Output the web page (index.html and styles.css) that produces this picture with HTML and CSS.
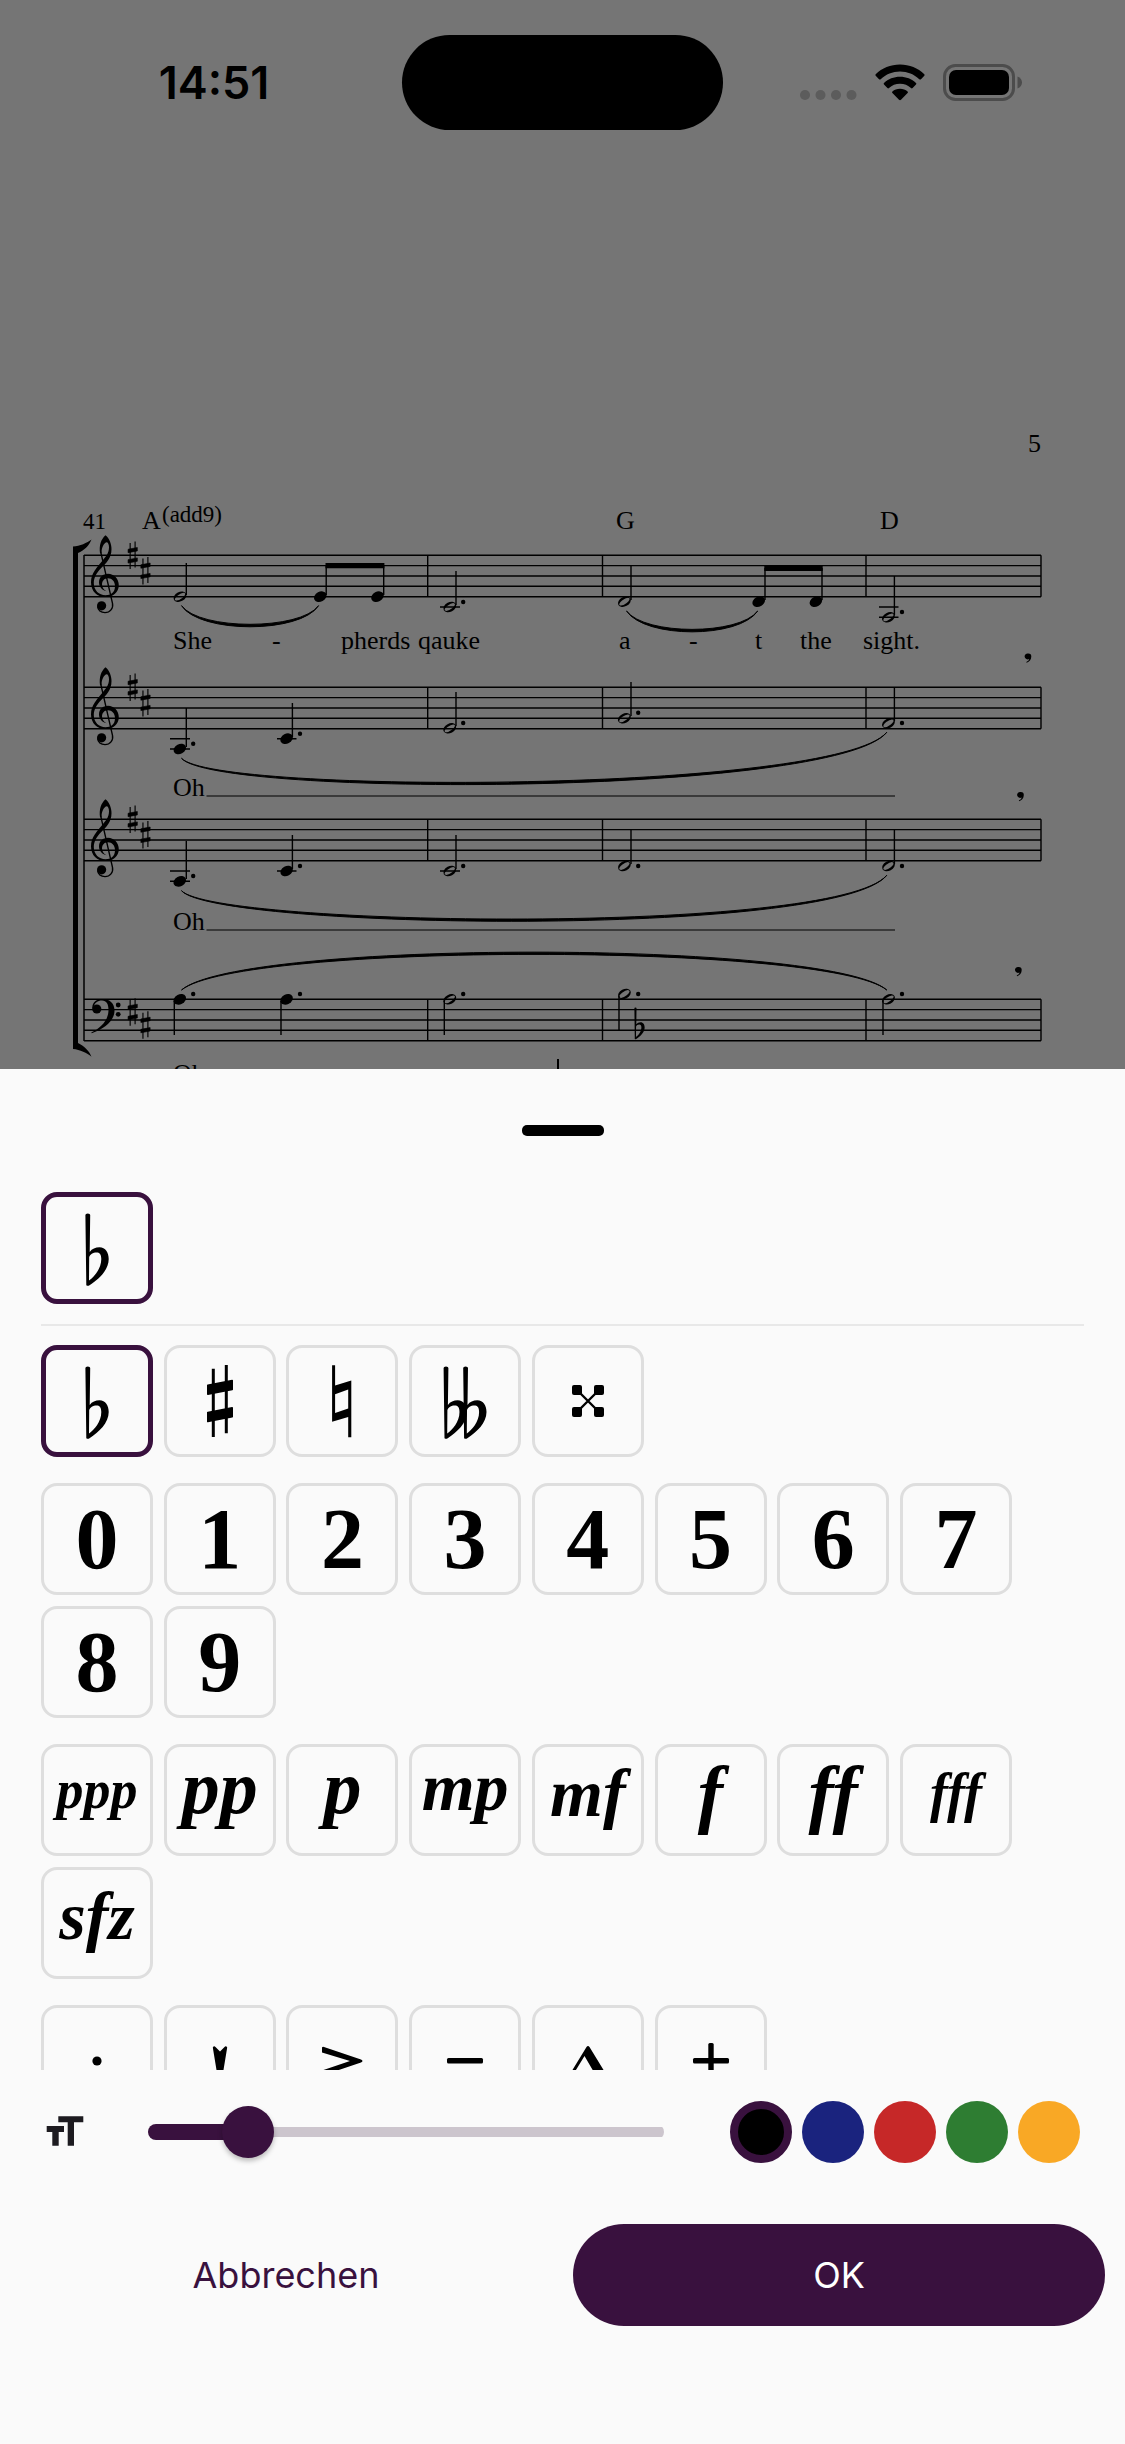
FILE: index.html
```
<!DOCTYPE html>
<html lang="de">
<head>
    <meta charset="UTF-8">
    <meta name="viewport" content="width=device-width, initial-scale=1.0">
    <title>Symbol auswählen</title>
    <link rel="stylesheet" href="styles.css">
</head>
<body>
    <!-- Shared music symbols, all centred on 0,0 -->
    <svg class="defs" aria-hidden="true">
        <defs>
            <path id="flat" fill-rule="evenodd" d="M-11.6-33q0-1.5 2.4-1.5t2.4 1.5L-7.3 4C-5 .8-1.5-.7 2.5-.7 8.5-.7 11.7 5 11.7 11 11.7 22 2 31-7.5 37.3q-1.6 1-3.2 0ZM-7.8 9L-8 32.5C-3 29 4.3 21 4.3 11 4.3 6 2.5 4.4-.5 4.4-4 4.4-7 6.5-7.8 9Z"/>
            <g id="sharp">
                <path d="M-6.7-32.3V36M6.3-36V32.3" fill="none" stroke="#000" stroke-width="3"/>
                <path d="M-12.2-15.8L12.2-20.5V-11.5L-12.2-6.8ZM-12.2 11.5L12.2 6.8V15.8L-12.2 20.5Z" stroke="#000" stroke-width="1.6" stroke-linejoin="round"/>
            </g>
            <g id="treble">
                <path d="M14.5-51C18.5-48 20.5-42 20.5-37 20.5-28 15-23 10-18 6-14 2.8-9 2.8-3 2.8 4 8 9 14.5 9 20 9 24 6 24 0 24-5 21-8 17-8 13-8 11-5 11-2 11 1 12.5 3.5 15.5 5 11 4 8 .5 8-4 8-9 12-12.5 17-12.5 23-12.5 27.8-7.5 27.8-1 27.8 6 22 10.8 14.5 10.8 6 10.8 0 5 0-4 0-13 6-19 11-25 15-30 18-33 18-39 18-42 17-44 15.5-44 12.5-43 10.5-38 10.5-33L9-33C8-41 10-47 14.5-51Z"/>
                <path d="M9.6-35L21.5 17C22.5 22 19 26.3 14 26.3 10 26.3 6.7 24 6.7 20" fill="none" stroke="#000" stroke-width="1.4"/>
                <circle cx="10.6" cy="19.5" r="4.6"/>
            </g>
            <ellipse id="black-note" rx="6.6" ry="4.9" transform="rotate(-28)"/>
            <path id="half-note" fill-rule="evenodd" transform="rotate(-28)" d="M-6.8 0A6.8 4.7 0 1 1 6.8 0A6.8 4.7 0 1 1-6.8 0ZM-5.8 1A6 2.3 -5 1 0 5.8-1A6 2.3 -5 1 0-5.8 1Z"/>
            <path id="breath" d="M0-4.5A3 3 0 0 1 3-1.4C3 2 1 4-1.6 4.8L-2 4C-.3 3.2.8 2.2.8 1A3 3 0 1 1 0-4.5Z"/>
            <g id="staff">
                <path d="M84 0H1041M84 10.3H1041M84 20.7H1041M84 31H1041M84 41.4H1041M427.7 0V41.4M602.5 0V41.4M866 0V41.4M1041 0V41.4" fill="none" stroke="#000" stroke-width="1.4"/>
            </g>
            <g id="treble-staff">
                <use href="#staff"/>
                <use href="#treble" x="91" y="31"/>
                <use href="#sharp" transform="translate(132.7 0) scale(.38)"/>
                <use href="#sharp" transform="translate(145.5 15.5) scale(.38)"/>
            </g>
        </defs>
    </svg>

    <header class="status-bar">
        <time class="clock">14:51</time>
        <div class="island"></div>
        <div class="status-icons">
            <svg width="57" height="37" viewBox="0 0 57 37" fill="#5c5c5c">
                <circle cx="5" cy="31" r="5"/><circle cx="20.5" cy="31" r="5"/><circle cx="36" cy="31" r="5"/><circle cx="51.5" cy="31" r="5"/>
            </svg>
            <svg width="50" height="37" viewBox="0 0 50 37">
                <path d="M25 0.5C34.500 .5 43 4 49.300 10.200Q50 11 49.300 11.800L46 15.200Q45.200 16 44.300 15.200C39 10.300 32.500 7.500 25 7.500S11 10.300 5.700 15.200Q4.800 16 4 15.200L.7 11.800Q0 11 .7 10.200C7 4 15.500.5 25 .5Z"/>
                <path d="M25 12.800C31.200 12.800 36.800 15 41 19Q41.800 19.800 41 20.600L37.600 24Q36.800 24.800 36 24C33 21.300 29.300 19.800 25 19.800S17 21.300 14 24Q13.200 24.800 12.400 24L9 20.600Q8.200 19.800 9 19C13.200 15 18.800 12.800 25 12.800Z"/>
                <path d="M25 24.800C28 24.800 30.600 25.800 32.600 27.500Q33.400 28.200 32.600 29L26 35.700Q25 36.600 24 35.700L17.400 29Q16.600 28.200 17.400 27.500C19.400 25.800 22 24.800 25 24.800Z"/>
            </svg>
            <svg width="80" height="37" viewBox="0 0 80 37">
                <rect x="1.500" y="1.500" width="69" height="34" rx="11" fill="none" stroke="#4c4c4c" stroke-width="3"/>
                <rect x="6" y="6" width="60" height="25" rx="7"/>
                <path d="M74.500 12.500C77.500 13.500 79 16 79 18.500S77.500 23.500 74.500 24.500Z" fill="#4c4c4c"/>
            </svg>
        </div>
    </header>

    <main class="score">
        <svg class="score-page" viewBox="0 130 1125 939" role="img" aria-label="Notenblatt, Seite 5">
            <text class="lyric" x="1028" y="452">5</text>
            <text class="small" x="83" y="529">41</text>
            <text class="lyric" x="142" y="529">A</text>
            <text class="small" x="162" y="522">(add9)</text>
            <text class="lyric" x="616" y="529">G</text>
            <text class="lyric" x="880" y="529">D</text>

            <!-- Bracket -->
            <path d="M73 546.500C80 546 87 543 91.500 539.500C89 546 84 550.500 78 553V1043C84 1046 89 1050.500 91.500 1056.700C87 1053 80 1049.500 73 1049Z"/>
            <path d="M84 555V1041" stroke="#000" stroke-width="1.500"/>

            <use href="#treble-staff" y="555.300"/>
            <use href="#treble-staff" y="687.300"/>
            <use href="#treble-staff" y="819.300"/>
            <use href="#staff" y="999.300"/>

            <!-- Bass clef and key -->
            <path d="M92.500 1009C91.500 1003 96 999 102.500 999C110 999 114.500 1003.500 114.500 1010.500C114.500 1021 104 1029 91.700 1033.300L91.300 1032.500C101 1028 108.500 1020 108.500 1010C108.500 1004 106.500 1000.500 102 1000.500C97.500 1000.500 94.500 1003 94 1006Z"/>
            <circle cx="96.800" cy="1009" r="4.600"/>
            <circle cx="118.200" cy="1005" r="2.400"/>
            <circle cx="118.200" cy="1014.300" r="2.400"/>
            <use href="#sharp" transform="translate(132.7 1012) scale(.38)"/>
            <use href="#sharp" transform="translate(145.5 1025) scale(.38)"/>

            <!-- Note heads -->
            <use href="#half-note" x="180" y="596.700"/>
            <use href="#black-note" x="320.300" y="596.700"/>
            <use href="#black-note" x="377.500" y="596.700"/>
            <use href="#half-note" x="449.800" y="607"/>
            <use href="#half-note" x="624.400" y="601.700"/>
            <use href="#black-note" x="758.700" y="601.700"/>
            <use href="#black-note" x="815.900" y="601.700"/>
            <use href="#half-note" x="888.500" y="617.300"/>
            <use href="#black-note" x="179.800" y="749"/>
            <use href="#black-note" x="286.600" y="738.700"/>
            <use href="#half-note" x="449.800" y="728.300"/>
            <use href="#half-note" x="624.400" y="718.300"/>
            <use href="#half-note" x="888.500" y="723.300"/>
            <use href="#black-note" x="179.800" y="881.300"/>
            <use href="#black-note" x="286.600" y="871"/>
            <use href="#half-note" x="449.800" y="871"/>
            <use href="#half-note" x="624.400" y="866"/>
            <use href="#half-note" x="888.500" y="866"/>
            <use href="#black-note" x="179.800" y="999.300"/>
            <use href="#black-note" x="286.600" y="999.300"/>
            <use href="#half-note" x="449.800" y="999.300"/>
            <use href="#half-note" x="624.400" y="994"/>
            <use href="#half-note" x="888.500" y="999.300"/>

            <!-- Stems, ledger lines -->
            <path fill="none" stroke="#000" stroke-width="1.400" d="M186.300 563V595M326.200 566V595M383.700 566V595M456 571V605M631 566V600M765 568V600M822 568V600M894.400 576V615M186.300 708V747M292.400 703V737M456 692V726M631 682V716M894.400 687V721M186.300 841V879M292.400 835V869M456 835V869M631 830V864M894.400 830V864M174.300 1001V1035M281 1001V1035M444.300 1001V1035M619 996V1030M883 1001V1035"/>
            <path fill="none" stroke="#000" stroke-width="1.500" d="M440 607H460M879 607H898.500M879 617.300H898.500M170 738.700H190M170 749H190M277 738.700H296.500M170 871H190M170 881.300H190M277 871H296.500M440 871H460"/>
            <path d="M325.500 563H384.400V568.300H325.500ZM764.300 565.800H822.700V571H764.300Z"/>

            <!-- Dots -->
            <path fill="none" stroke="#000" stroke-width="4.400" stroke-linecap="round" d="M463.200 602h0M902 612h0M193.200 743.700h0M300 733.700h0M463.200 723h0M638.200 712.700h0M902 723h0M193.200 876h0M300 866h0M463.200 866h0M638.200 866h0M902 866h0M193.200 994h0M300 994h0M463.200 994h0M638.200 994h0M902 994h0"/>

            <!-- Slurs -->
            <path stroke="#000" stroke-linejoin="round" d="M181.500 605.700C200 633.800 300 633.800 318.600 605.700C300 630.500 200 630.500 181.500 605.700Z"/>
            <path stroke="#000" stroke-linejoin="round" d="M626.500 611C645 638.800 739 638.800 757.700 611C739 635.500 645 635.500 626.500 611Z"/>
            <path stroke="#000" stroke-linejoin="round" d="M181.500 758.300C215 797.500 835 796 886.800 732.300C835 793 215 794.500 181.500 758.300Z"/>
            <path stroke="#000" stroke-linejoin="round" d="M181.500 890.700C215 929.500 835 938.500 886.800 875.300C835 935.500 215 926.500 181.500 890.700Z"/>
            <path stroke="#000" stroke-linejoin="round" d="M181.500 990C240 939.500 828 939.500 886.800 990C828 942.500 240 942.500 181.500 990Z"/>

            <text class="lyric" x="173" y="649">She</text>
            <text class="lyric" x="272" y="649">-</text>
            <text class="lyric" x="341" y="649">pherds</text>
            <text class="lyric" x="418" y="649">qauke</text>
            <text class="lyric" x="619" y="649">a</text>
            <text class="lyric" x="689" y="649">-</text>
            <text class="lyric" x="755" y="649">t</text>
            <text class="lyric" x="800" y="649">the</text>
            <text class="lyric" x="863" y="649">sight.</text>
            <text class="lyric" x="173" y="796">Oh</text>
            <text class="lyric" x="173" y="930">Oh</text>
            <text class="lyric" x="173" y="1082">Oh</text>
            <path d="M206.500 796H895M206.500 930H895" stroke="#000" stroke-width="1"/>
            <path d="M558 1059V1069" stroke="#000" stroke-width="2"/>

            <use href="#breath" x="1028.300" y="658"/>
            <use href="#breath" x="1020.800" y="796.500"/>
            <use href="#breath" x="1018.700" y="971.500"/>

            <!-- Flat placed by the user -->
            <use href="#flat" transform="translate(639.5 1022.6) scale(.44)"/>
        </svg>
    </main>

    <section class="sheet">
        <div class="handle"></div>

        <div class="recent">
            <button class="tile selected" aria-label="Be"><svg viewBox="-56 -56 112 112"><use href="#flat"/></svg></button>
        </div>

        <div class="palette">
            <div class="group">
                <button class="tile selected" aria-label="Be"><svg viewBox="-56 -56 112 112"><use href="#flat"/></svg></button>
                <button class="tile" aria-label="Kreuz"><svg viewBox="-56 -56 112 112"><use href="#sharp"/></svg></button>
                <button class="tile" aria-label="Auflösungszeichen">
                    <svg viewBox="-56 -56 112 112">
                        <path d="M-9.900-35.700H-6.900V-15.500L9.300-20.500V36.300H6.200V16L-9.900 20.700ZM-6.900-6.800V12L6.200 7.500V-11.500Z" fill-rule="evenodd"/>
                    </svg>
                </button>
                <button class="tile" aria-label="Doppel-Be">
                    <svg viewBox="-56 -56 112 112"><use href="#flat" x="-9.800"/><use href="#flat" x="9.800"/></svg>
                </button>
                <button class="tile" aria-label="Doppelkreuz">
                    <svg viewBox="-56 -56 112 112">
                        <path d="M-10-10L10 10M10-10L-10 10" stroke="#000" stroke-width="2.400"/>
                        <rect x="-16" y="-16" width="10" height="10" rx="2"/><rect x="6" y="-16" width="10" height="10" rx="2"/>
                        <rect x="-16" y="6" width="10" height="10" rx="2"/><rect x="6" y="6" width="10" height="10" rx="2"/>
                    </svg>
                </button>
            </div>

            <div class="group">
                <button class="tile digit">0</button>
                <button class="tile digit">1</button>
                <button class="tile digit">2</button>
                <button class="tile digit">3</button>
                <button class="tile digit">4</button>
                <button class="tile digit">5</button>
                <button class="tile digit">6</button>
                <button class="tile digit">7</button>
                <button class="tile digit">8</button>
                <button class="tile digit">9</button>
            </div>

            <div class="group">
                <button class="tile dynamic piano small-text">ppp</button>
                <button class="tile dynamic piano">pp</button>
                <button class="tile dynamic piano">p</button>
                <button class="tile dynamic piano medium-text">mp</button>
                <button class="tile dynamic medium-text">mf</button>
                <button class="tile dynamic">f</button>
                <button class="tile dynamic">ff</button>
                <button class="tile dynamic small-text">fff</button>
                <button class="tile dynamic medium-text">sfz</button>
            </div>

            <div class="group">
                <button class="tile" aria-label="Staccato"><svg viewBox="-56 -56 112 112"><circle r="4.600"/></svg></button>
                <button class="tile" aria-label="Staccatissimo"><svg viewBox="-56 -56 112 112"><path d="M-7.200-13.500Q-6-15.800-4.500-14L0-9.500L4.500-14Q6-15.800 7.200-13.500L2.500 15H-2.500Z"/></svg></button>
                <button class="tile" aria-label="Akzent"><svg viewBox="-56 -56 112 112"><path d="M-20-13.500Q-19.500-14.500-18-14L19-1.500Q22 0 19 1.500L-18 14Q-20 14.500-20 12V9.500L8 0L-20-8.500Z"/></svg></button>
                <button class="tile" aria-label="Tenuto"><svg viewBox="-56 -56 112 112"><rect x="-18" y="-3" width="36" height="5.500" rx="1.500"/></svg></button>
                <button class="tile" aria-label="Marcato"><svg viewBox="-56 -56 112 112"><path d="M-18 13L-1.500-14Q0-16 1.500-14L18 13H7L-3.500-5L-14.500 13Z"/></svg></button>
                <button class="tile" aria-label="Plus"><svg viewBox="-56 -56 112 112"><rect x="-18" y="-3" width="36" height="5.500" rx="1.500"/><rect x="-2.700" y="-18" width="5.400" height="36" rx="1.500"/></svg></button>
            </div>
        </div>

        <div class="controls">
            <label class="size-label" for="size" aria-label="Größe">
                <svg width="48" height="48" viewBox="0 0 48 48" fill="#1d1b20"><path d="M17.300 8.300H42.300V14.300H33V37.700H26.700V14.300H17.300ZM5.700 18H23V24H17.700V37.700H11.300V24H5.700Z"/></svg>
            </label>
            <input class="slider" id="size" type="range" min="0" max="100" value="16">
            <div class="colors">
                <input class="color black" type="radio" name="color" aria-label="Schwarz" checked>
                <input class="color blue" type="radio" name="color" aria-label="Blau">
                <input class="color red" type="radio" name="color" aria-label="Rot">
                <input class="color green" type="radio" name="color" aria-label="Grün">
                <input class="color orange" type="radio" name="color" aria-label="Orange">
            </div>
        </div>

        <div class="actions">
            <button class="action">Abbrechen</button>
            <button class="action primary">OK</button>
        </div>
    </section>
</body>
</html>
```
FILE: styles.css
```
* {
    box-sizing: border-box;
}

body {
    margin: 0;
    min-height: 100vh;
    display: flex;
    flex-direction: column;
    background-color: #757575;
    font-family: Inter, "Liberation Sans", sans-serif;
    color: #000;
}

button {
    margin: 0;
    padding: 0;
    font-family: inherit;
    cursor: pointer;
}

.defs {
    position: absolute;
    width: 0;
    height: 0;
}

/* Status bar */
.status-bar {
    display: grid;
    grid-template-columns: 1fr 321px 1fr;
    align-items: center;
    padding-top: 35px;
}

.clock {
    padding-left: 26px;
    text-align: center;
    font-size: 45px;
    font-weight: 600;
}

.island {
    height: 95px;
    border-radius: 48px;
    background-color: #000;
}

.status-icons {
    display: flex;
    justify-content: center;
    gap: 18px;
    padding-right: 26px;
}

/* Score */
.score-page {
    display: block;
    width: 100%;
}

.lyric,
.small {
    font-family: "Liberation Serif", serif;
    font-size: 26px;
}

.small {
    font-size: 23px;
}

/* Bottom sheet */
.sheet {
    flex: 1;
    display: flex;
    flex-direction: column;
    padding-top: 56px;
    background-color: #fafafa;
}

.handle {
    align-self: center;
    width: 82px;
    height: 11px;
    border-radius: 5px;
    background-color: #000;
}

.recent {
    margin: 56px 41px 19px;
    padding-bottom: 20px;
    border-bottom: 2px solid #e8e8e8;
}

.palette {
    display: flex;
    flex-direction: column;
    gap: 26px;
    height: 725px;
    padding: 0 41px;
    overflow-y: auto;
    scrollbar-width: none;
}

.group {
    display: grid;
    grid-template-columns: repeat(8, 112px);
    justify-content: space-between;
    row-gap: 11px;
    max-width: 971px;
}

.tile {
    display: flex;
    align-items: center;
    justify-content: center;
    width: 112px;
    height: 112px;
    border: 3px solid #dedede;
    border-radius: 16px;
    background-color: transparent;
    color: #000;
}

.tile.selected {
    border: 5px solid #39113e;
}

.tile svg {
    flex: none;
    width: 112px;
    height: 112px;
}

.digit,
.dynamic {
    font-family: "Liberation Serif", serif;
    font-size: 86px;
    font-weight: bold;
    line-height: 1;
}

.dynamic {
    padding-bottom: 14px;
    font-size: 76px;
    font-style: italic;
}

.piano {
    padding-bottom: 26px;
}

.medium-text {
    font-size: 68px;
}

.small-text {
    font-size: 54px;
}

.piano.small-text {
    padding-bottom: 20px;
}

/* Size and color */
.controls {
    display: flex;
    align-items: center;
    margin-top: 31px;
    padding: 0 45px 0 41px;
}

.size-label svg {
    display: block;
}

.slider {
    flex: 1;
    min-width: 0;
    height: 52px;
    margin: 0 66px 0 59px;
    appearance: none;
    background: none;
}

.slider::-webkit-slider-runnable-track {
    height: 16px;
    border-radius: 8px;
    background:
        linear-gradient(#39113e, #39113e) left / 20% 16px no-repeat,
        linear-gradient(#ccc5cd, #ccc5cd) center / 100% 10px no-repeat;
}

.slider::-webkit-slider-thumb {
    appearance: none;
    width: 52px;
    height: 52px;
    margin-top: -18px;
    border-radius: 50%;
    background-color: #39113e;
    box-shadow: 0 3px 5px rgba(0, 0, 0, 0.25);
}

.colors {
    display: flex;
    gap: 10px;
}

.color {
    appearance: none;
    width: 62px;
    height: 62px;
    margin: 0;
    border-radius: 50%;
}

.color:checked {
    border: 8px solid #39113e;
}

.black {
    background-color: #000;
}

.blue {
    background-color: #1a237e;
}

.red {
    background-color: #c62828;
}

.green {
    background-color: #2e7d32;
}

.orange {
    background-color: #f9a825;
}

/* Buttons */
.actions {
    display: grid;
    grid-template-columns: 1fr 1fr;
    gap: 21px;
    margin-top: 61px;
    padding: 0 20px 118px;
}

.action {
    height: 102px;
    border: 0;
    border-radius: 51px;
    background-color: transparent;
    color: #39113e;
    font-size: 36px;
    font-weight: 400;
}

.action.primary {
    background-color: #39113e;
    color: #fff;
}
```
